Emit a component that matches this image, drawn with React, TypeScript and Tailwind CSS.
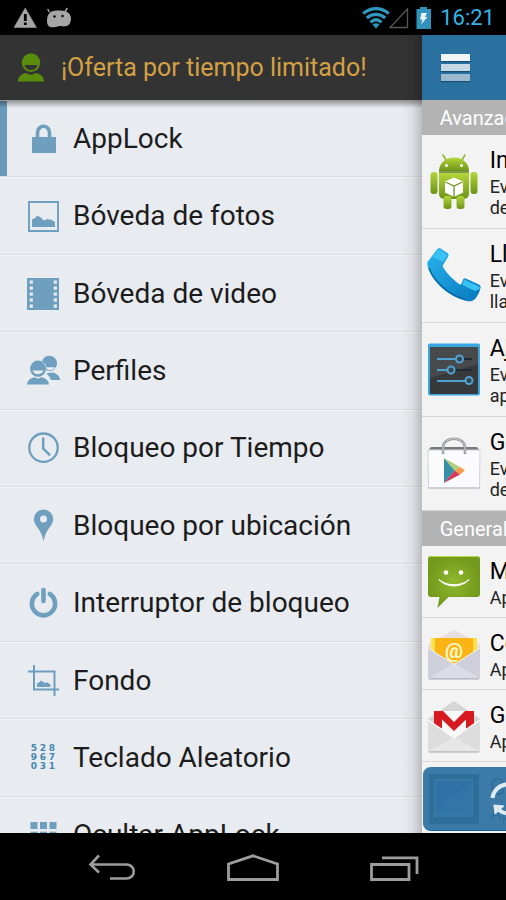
import type { ReactNode } from "react";

type MenuEntry = { label: string; icon: ReactNode; active?: boolean };
type AppEntry = { title: string; lines: string[]; icon: ReactNode };

function Glyph({ children }: { children: ReactNode }) {
  return (
    <svg viewBox="0 0 32 32" className="size-8 shrink-0 overflow-visible fill-[#6f9fbf]" aria-hidden="true">
      {children}
    </svg>
  );
}

function AppIcon({ children }: { children: ReactNode }) {
  return (
    <svg viewBox="0 0 56 56" className="size-14 shrink-0" aria-hidden="true">
      {children}
    </svg>
  );
}

// Real digits, so the scrambled keypad stays text.
function KeypadGlyph() {
  return (
    <span
      aria-hidden="true"
      className="grid w-8 shrink-0 grid-cols-[9px_9px_9px] justify-center text-center font-['DejaVu_Sans',sans-serif] text-[9px] leading-[9px] font-bold text-[#4387b0]"
    >
      {"528967031".split("").map((digit) => (
        <span key={digit}>{digit}</span>
      ))}
    </span>
  );
}

const MENU: MenuEntry[] = [
  {
    label: "AppLock",
    active: true,
    icon: (
      <Glyph>
        <path d="M5 14h3.700V9.500a7.800 8 0 0 1 15.600 0V14H29v16H5zM12.300 14h8.400V9.500a4.200 4.400 0 0 0-8.400 0z" />
      </Glyph>
    ),
  },
  {
    label: "Bóveda de fotos",
    icon: (
      <Glyph>
        <path fillRule="evenodd" d="M1 1h31v31H1zM2.900 2.900v27.200h27.200V2.900z" />
        <path d="M5 27v-7.500l3-1.500 2.600-2.600 3 2.200 3.400 2.900 3.500-1.500 1.800.8 1.700-.4 4 2.500V27z" />
      </Glyph>
    ),
  },
  {
    label: "Bóveda de video",
    icon: (
      <Glyph>
        <path d="M0 0h32v32H0z" />
        <g className="fill-[#e8ebf0]">
          {[2.5, 8.500, 14.500, 20.500, 26.500].map((y) => (
            <g key={y}>
              <rect x="2.700" y={y} width="3.200" height="3.200" />
              <rect x="26.700" y={y} width="3.200" height="3.200" />
            </g>
          ))}
        </g>
      </Glyph>
    ),
  },
  {
    label: "Perfiles",
    icon: (
      <Glyph>
        <path d="M15 6.500a7.600 7.600 0 0 1 15 1.700c0 4.200-3.400 7.800-7.500 7.800-1.300 0-2.500-.4-3.500-1C20 11 18.500 8 15 6.500z" />
        <path d="M19.500 12.300H28c-1 2-3 3.200-5.200 3-1.500 0-2.700-.9-3.300-1.800z" className="fill-[#e8ebf0]" />
        <path d="M19 18.500c1.300-.2 2.500-.4 3.500-1l1.200.5 1.600-.6c4 .6 7.200 3 8 7.600H24c-1-3-2.700-5-5-6.500z" />
        <ellipse cx="11" cy="13.700" rx="7.900" ry="8.200" />
        <path d="M5.500 15.500h11c-1 2.500-3 3.600-5.500 3.600s-4.500-1.100-5.500-3.600z" className="fill-[#e8ebf0]" />
        <path d="M0 29.500c.3-4 3.500-6.500 7.500-7.300l3.500 1.600 3.500-1.600c4 .8 7.200 3.300 7.500 7.300z" />
      </Glyph>
    ),
  },
  {
    label: "Bloqueo por Tiempo",
    icon: (
      <Glyph>
        <g className="fill-none stroke-[#6f9fbf]">
          <circle cx="16.500" cy="15.700" r="14.200" strokeWidth="2.300" />
          <path d="M16.200 6.500v10.200l6.200 6" strokeWidth="2.500" strokeLinecap="round" strokeLinejoin="round" />
        </g>
      </Glyph>
    ),
  },
  {
    label: "Bloqueo por ubicación",
    icon: (
      <Glyph>
        <path
          fillRule="evenodd"
          d="M16.500-.5a9.600 9.600 0 0 1 9.700 9.600c0 3.200-1.500 5.600-3.500 8.200-3 4-5 7.700-6.200 14.200-1.200-6.500-3.200-10.200-6.200-14.200-2-2.600-3.500-5-3.500-8.200A9.600 9.600 0 0 1 16.500-.5zm0 6a3.500 3.500 0 1 0 0 7 3.500 3.500 0 0 0 0-7z"
        />
      </Glyph>
    ),
  },
  {
    label: "Interruptor de bloqueo",
    icon: (
      <Glyph>
        <g className="fill-none stroke-[#6f9fbf]" strokeWidth="4.600" strokeLinecap="round">
          <path d="M10.200 7a11.600 11.600 0 1 0 12.600 0" />
          <path d="M16.500 3v11" />
        </g>
      </Glyph>
    ),
  },
  {
    label: "Fondo",
    icon: (
      <Glyph>
        <path d="M7 24V0M1 6.500h26.500V31M6 24.500h26" className="fill-none stroke-[#6f9fbf]" strokeWidth="2" />
        <path d="M10 22v-3.500l2-1 2-2 1.500 1 2.500 1.600 2-.8 3.500 2.200V22z" />
      </Glyph>
    ),
  },
  { label: "Teclado Aleatorio", icon: <KeypadGlyph /> },
  {
    label: "Ocultar AppLock",
    icon: (
      <Glyph>
        {[3, 12.700, 22.400].map((y) => (
          <g key={y}>
            <rect x="3.500" y={y} width="7" height="7" />
            <rect x="13" y={y} width="7" height="7" />
            <rect x="22.500" y={y} width="7" height="7" />
          </g>
        ))}
      </Glyph>
    ),
  },
];

const ADVANCED: AppEntry[] = [
  {
    title: "Instalar",
    lines: ["Evitar", "desinstalar"],
    icon: (
      <AppIcon>
        <defs>
          <linearGradient id="droid" x1="0" y1="0" x2="0" y2="1">
            <stop offset="0" stopColor="#b6d63a" />
            <stop offset="1" stopColor="#6c9319" />
          </linearGradient>
        </defs>
        <path d="m18 6-3-5M34 6l3-5" transform="translate(2 0)" stroke="#8fb52a" strokeWidth="1.500" strokeLinecap="round" />
        <g fill="url(#droid)">
          <path d="M13 17C13.500 8 20 3.500 28 3.500S42.500 8 43 17z" />
          <path d="M13 19h30v21a5 5 0 0 1-5 5H18a5 5 0 0 1-5-5z" />
          <rect x="4.500" y="18" width="7" height="22" rx="3" />
          <rect x="44.500" y="18" width="7" height="22" rx="3" />
          <rect x="17.500" y="42" width="8" height="13" rx="3" />
          <rect x="30.500" y="42" width="8" height="13" rx="3" />
        </g>
        <path d="M13 18h30" stroke="#587c12" strokeWidth="1.500" />
        <circle cx="20.500" cy="11.500" r="1.500" fill="#fff" />
        <circle cx="35.500" cy="11.500" r="1.500" fill="#fff" />
        <path d="m28 23.500 9 4v11L28 43l-9-4.500v-11z" fill="#fff" />
        <path d="m19.500 28 8.500 4 8.500-4M28 32v11" fill="none" stroke="#6e951c" strokeWidth="1.300" />
      </AppIcon>
    ),
  },
  {
    title: "Llamadas",
    lines: ["Evitar", "llamadas"],
    icon: (
      <AppIcon>
        <defs>
          <linearGradient id="phone" x1="0" y1="0" x2="1" y2="1">
            <stop offset="0" stopColor="#27b4ee" />
            <stop offset="1" stopColor="#0878bd" />
          </linearGradient>
        </defs>
        <path
          d="M1.500 14 11 1.500c1-1.200 2.500-1.500 4-.7l6 4c1.500 1 1.900 2.400 1.200 3.700l-4.500 7.500c-.8 1.400-1.400 2-.5 3.500C20.500 25 27 31.500 33 36c1 .7 1.800.6 2.500-.2l1.500-4c.6-1.300 1.500-1.800 2.800-1.400l13 6c1.500.7 2 2 1.700 3.500-.8 3.500-2.500 7.500-5 10.500-2.500 2.700-5.500 3.500-9 2.500C23.500 49 7 35 2 19.500c-.6-2-.9-3.900-.5-5.500z"
          fill="url(#phone)"
        />
        <path d="M11.500 2.500c1-1.200 2-1 3-.4l5.700 4c1 .7 1.200 1.500.6 2.500L17 14 6.500 9zM38 31.500l15 7c1 .5 1 1.500.7 2.500L49 43l-12.500-6z" fill="#38c2f5" />
        <path d="M3 20c5 14 20 27 37 31.500" fill="none" stroke="#0a69a8" strokeWidth="1.500" />
      </AppIcon>
    ),
  },
  {
    title: "Ajustes",
    lines: ["Evitar", "apertura"],
    icon: (
      <AppIcon>
        <rect x="2" y="1.500" width="52" height="52" rx="2" fill="#3ba5df" />
        <rect x="4" y="5" width="48" height="47" fill="#47494b" />
        <path d="M4 36 52 22v30H4z" fill="#37393b" />
        <g stroke="#1d2b35" strokeWidth="2">
          <path d="M11 17h35M11 28h35M11 39h35" />
        </g>
        <g fill="#35444e" stroke="#4fa3d1" strokeWidth="2">
          <path d="M11 17h19M11 28h10M11 39h28" />
          <circle cx="33.500" cy="17" r="3.500" />
          <circle cx="25" cy="28" r="3.500" />
          <circle cx="43" cy="38.500" r="3.500" />
        </g>
      </AppIcon>
    ),
  },
  {
    title: "Google",
    lines: ["Evitar", "descargas"],
    icon: (
      <AppIcon>
        <path d="M5 11h46l3 4H2z" fill="#77797f" />
        <path d="M2 14h52l-.5 38h-51z" fill="#fbfbfd" stroke="#d3d3de" strokeWidth="1" />
        <path d="M2.500 52h51" stroke="#b5b5c4" />
        <path d="M17 18v-7c1-11 21-11 22 0v7" fill="none" stroke="#8c8e96" strokeWidth="2.500" />
        <path d="M17 17v-6c1-11 21-11 22 0v6" fill="none" stroke="#cfd0d5" strokeWidth="1" />
        <path d="M18 22v25l11-12.500z" fill="#3691a8" />
        <path d="m18 22 16 9-5 4z" fill="#b3cf7b" />
        <path d="m18 47 16-8.500-5-4z" fill="#d8375a" />
        <path d="m34 31 5 3.500-5 4-5-4z" fill="#f39c4b" />
      </AppIcon>
    ),
  },
];

const GENERAL: AppEntry[] = [
  {
    title: "Mensajes",
    lines: ["Aplicación"],
    icon: (
      <AppIcon>
        <defs>
          <radialGradient id="sms">
            <stop offset="0" stopColor="#8fb92e" />
            <stop offset="1" stopColor="#739a1c" />
          </radialGradient>
        </defs>
        <path
          d="M5 2h46a3 3 0 0 1 3 3v35a3 3 0 0 1-3 3H22.500L11.500 54l2-11H5a3 3 0 0 1-3-3V5a3 3 0 0 1 3-3z"
          fill="url(#sms)"
        />
        <path d="M3 3.500C3.500 2.500 4 2.500 5 2.500h46c1 0 1.500 0 2 1" fill="none" stroke="#b7db48" />
        <circle cx="20" cy="18.500" r="2.300" fill="#fff" />
        <circle cx="35" cy="18.500" r="2.300" fill="#fff" />
        <path d="M13 25.500c8 7 22 7 30 0-7 8.500-23 8.500-30 0z" fill="#fff" stroke="#fff" strokeWidth="1" strokeLinejoin="round" />
      </AppIcon>
    ),
  },
  {
    title: "Correo",
    lines: ["Aplicación"],
    icon: (
      <AppIcon>
        <path d="M2 18 28 4l26 14v34H2z" fill="#e8dedc" />
        <path d="M5 12h46v30H5z" fill="#fde04a" />
        <path d="M9 12h38v26H9z" fill="#fbb416" />
        <text x="28" y="32" textAnchor="middle" className="fill-[#fffbd0] font-['Roboto',sans-serif] text-[20px] font-bold">
          @
        </text>
        <path d="M2 22 28 38.500 54 22v29a2 2 0 0 1-2 2H4a2 2 0 0 1-2-2z" fill="#cfcfdb" />
        <path d="M3 52 28 37l25 15" fill="#dcdce5" />
        <path d="m2 22 26 16.500L54 22" fill="none" stroke="#f3f3f8" />
        <path d="M3 53h50" stroke="#a9a9b8" />
      </AppIcon>
    ),
  },
  {
    title: "Gmail",
    lines: ["Aplicación"],
    icon: (
      <AppIcon>
        <path d="M2 21 28 3l26 18v20H2z" fill="#d5d5d5" />
        <path d="M8 13h40v26H8z" fill="#f8f8f8" />
        <path d="M8 13h9l11 11 11-11h9v21h-8V21.500L28 33 16 21.500V34H8z" fill="#d71920" />
        <path d="M2 22 28 39.500 54 22v30a2 2 0 0 1-2 2H4a2 2 0 0 1-2-2z" fill="#ddd" />
        <path d="m3 53 25-14 25 14" fill="#e7e7e7" />
        <path d="m2 22 26 17.500L54 22" fill="none" stroke="#fbfbfb" strokeWidth="1.500" />
        <path d="M3 54h50" stroke="#a8a8a8" />
      </AppIcon>
    ),
  },
  {
    title: "Galería",
    lines: ["Aplicación"],
    icon: (
      <AppIcon>
        <rect x="3" y="4" width="50" height="50" fill="#111" />
        <rect x="9" y="10" width="37" height="36" fill="#2455c8" stroke="#8cc" strokeWidth="2" />
        <path d="m10 45 13-16 8-5 14-10v31z" fill="#3a8ae0" />
      </AppIcon>
    ),
  },
];

function StatusBar() {
  return (
    <div className="flex h-[35px] shrink-0 items-center bg-black pr-[11px] pl-3.5">
      <svg viewBox="0 0 60 24" className="h-6 w-[60px]" fill="#a6a6a6" aria-hidden="true">
        <path d="M11.200 2 22.500 21.500H0z" stroke="#a6a6a6" strokeLinejoin="round" strokeWidth=".5" />
        <path d="M9.900 8h2.800v7H9.900zM9.900 16.500h2.800v2.600H9.900z" fill="#000" />
        <path d="M35 5.500 34 3.500M51.500 5l1.500-2.500" stroke="#a6a6a6" strokeWidth="1.500" strokeLinecap="round" />
        <path d="M33 15c0-6.500 3-10.500 9.500-10.500h4C53 4.500 57 7.500 57 12.500s-2.500 8-7.500 8c-2 0-3-.7-5-.2-2 .8-4 1-6.500 1-3.500 0-5-2.800-5-6.300z" />
        <circle cx="40.500" cy="10.500" r="1.200" fill="#000" />
        <circle cx="48.500" cy="10" r="1.200" fill="#000" />
      </svg>
      <svg viewBox="0 0 70 24" className="ml-auto h-6 w-[70px]" aria-hidden="true">
        <g fill="none" stroke="#2f98c1" strokeWidth="3.200">
          <path d="M1.200 7.500c8-6.500 17.600-6.500 25.600 0" />
          <path d="M4.800 12c5.500-4.800 12.900-4.800 18.400 0" />
          <path d="M8.500 16.200c3.400-3 7.600-3 11 0" />
        </g>
        <path d="M10.500 18.500c2-1.700 5-1.700 7 0L14 22.500z" fill="#2f98c1" />
        <path d="M45.500 3v18.500H28z" fill="none" stroke="#555" strokeWidth="1.300" />
        <path d="M58 1h7v2h4v20H54.500V3H58z" fill="#3193bd" />
        <path d="M59.500 7h5.500l-2 4h2.500L59 18.500l1.500-5H58z" fill="#e9f4f9" />
      </svg>
      <time className="ml-2 text-[22px] leading-6 text-[#33b5e5]">16:21</time>
    </div>
  );
}

function Drawer() {
  return (
    <nav aria-label="Menú" className="relative flex w-5/6 shrink-0 flex-col overflow-hidden bg-[#e8ebf0]">
      <a href="#oferta" className="flex h-[65px] shrink-0 items-center gap-4 bg-[#333] pl-[17px]">
        <svg viewBox="0 0 28 30" className="h-[30px] w-7" fill="#5a8c0c" aria-hidden="true">
          <ellipse cx="14" cy="9.700" rx="9.200" ry="9.400" />
          <path d="M7.500 12h13c-1 3.500-3.400 5-6.500 5s-5.500-1.500-6.500-5z" fill="#333" />
          <path d="M.8 28.500c.5-5 3.700-7.700 8-8.500l5.200 2 5.200-2c4.300.8 7.500 3.500 8 8.500z" />
        </svg>
        <span className="text-[25px] leading-8 whitespace-nowrap text-[#d3a144]">¡Oferta por tiempo limitado!</span>
      </a>
      <div className="relative shrink-0">
        <div className="absolute inset-x-0 top-0 z-10 h-2 bg-linear-to-b from-black/40 to-transparent" />
        {/* Ten equal rows; the last one runs under the navigation bar. */}
        <ul className="flex min-h-[774px] flex-col">
          {MENU.map((entry) => (
            <li key={entry.label} className="flex flex-1 border-t border-b border-t-[#f4f5f7] border-b-[#d9dbde]">
              <a
                href="#menu"
                aria-current={entry.active ? "page" : undefined}
                className={
                  entry.active
                    ? "flex flex-1 items-center gap-3.5 border-l-[7px] border-[#6a9abb] pl-5"
                    : "flex flex-1 items-center gap-3.5 pl-[27px]"
                }
              >
                {entry.icon}
                <span className="text-[28px] leading-9 whitespace-nowrap text-[#1c1c1c]">{entry.label}</span>
              </a>
            </li>
          ))}
        </ul>
      </div>
      <div className="pointer-events-none absolute inset-y-0 right-0 z-20 w-5 bg-linear-to-r from-transparent via-black/5 to-black/20" />
    </nav>
  );
}

function Section({ title, apps, rowClass }: { title: string; apps: AppEntry[]; rowClass: string }) {
  return (
    <section>
      <h2 className="flex h-[35px] items-center bg-[#b3b3b3] pl-[18px] text-[20px] leading-6 text-white">{title}</h2>
      <ul>
        {apps.map((app) => (
          <li key={app.title} className={rowClass}>
            {app.icon}
            <div className="pt-0.5 whitespace-nowrap text-black">
              <h3 className="mb-px text-[23px] leading-7">{app.title}</h3>
              {app.lines.map((line) => (
                <p key={line} className="text-[18px] leading-[21px] text-[#222]">
                  {line}
                </p>
              ))}
            </div>
          </li>
        ))}
      </ul>
    </section>
  );
}

function AppPanel() {
  return (
    <main className="relative min-w-0 flex-1 overflow-hidden bg-[#f3f3f3]">
      <header className="flex h-[65px] items-center bg-[#2a719f] pl-[19px]">
        <button type="button" aria-label="Abrir menú" className="flex flex-col gap-[3px]">
          <span className="h-[7px] w-[29px] bg-[#f2f5f7] shadow-[0_1px_1px_#174e73]" />
          <span className="h-[7px] w-[29px] bg-[#c6d8e3] shadow-[0_1px_1px_#174e73]" />
          <span className="h-[7px] w-[29px] bg-[#9bbace] shadow-[0_1px_1px_#174e73]" />
        </button>
      </header>
      <Section
        title="Avanzadas"
        apps={ADVANCED}
        rowClass="flex h-[94px] items-center gap-2 border-b border-[#d6d6d6] pl-1"
      />
      <Section
        title="General"
        apps={GENERAL}
        rowClass="flex h-[72px] items-center gap-2 border-b border-[#d6d6d6] pl-1"
      />
      {/* Action bar floats over the last row, which shows faintly through it. */}
      <button
        type="button"
        aria-label="Actualizar"
        className="absolute right-0 bottom-0.5 left-px h-16 rounded-l-lg border-b border-[#0f6699] bg-[#3274a3]/95"
      >
        <svg viewBox="0 0 40 40" className="ml-[66px] size-10" fill="none" stroke="#dfe9f0" strokeWidth="4" aria-hidden="true">
          <path d="M3.500 19A16 15 0 0 1 34 14" />
          <path d="M36 22a16 15 0 0 1-28 7" />
          <path d="m5 26 2 9M5 26l10 1-9 8z" fill="#dfe9f0" strokeWidth="1" />
        </svg>
      </button>
    </main>
  );
}

function NavigationBar() {
  return (
    <div className="flex h-[67px] shrink-0 items-center justify-center bg-black pt-0.5">
      <button type="button" aria-label="Atrás" className="flex w-[141px] justify-center">
        <svg viewBox="0 0 48 28" className="h-7 w-12" fill="none" stroke="#9d9d9d" strokeWidth="2.600" aria-hidden="true">
          <path d="M11 1.500 2.500 10.500 11 18.500M3 10.500h35.500a7.300 7 0 0 1 0 14H22" />
        </svg>
      </button>
      <button type="button" aria-label="Inicio" className="flex w-[141px] justify-center">
        <svg viewBox="0 0 54 28" className="h-7 w-[54px]" fill="none" stroke="#9d9d9d" strokeWidth="2.800" aria-hidden="true">
          <path d="M2.500 25.500V10L27 1.800 51.500 10v15.500z" />
        </svg>
      </button>
      <button type="button" aria-label="Recientes" className="flex w-[141px] justify-center">
        <svg viewBox="0 0 50 28" className="h-7 w-[50px]" fill="none" stroke="#9d9d9d" strokeWidth="2.800" aria-hidden="true">
          <path d="M2.500 10.500h37.500v15H2.500zM13 3.800h35v16.200" />
        </svg>
      </button>
    </div>
  );
}

export default function App() {
  return (
    <div className="flex h-screen flex-col overflow-hidden bg-black font-['Roboto',sans-serif]">
      <StatusBar />
      <div className="flex min-h-0 flex-1">
        <Drawer />
        <AppPanel />
      </div>
      <NavigationBar />
    </div>
  );
}
